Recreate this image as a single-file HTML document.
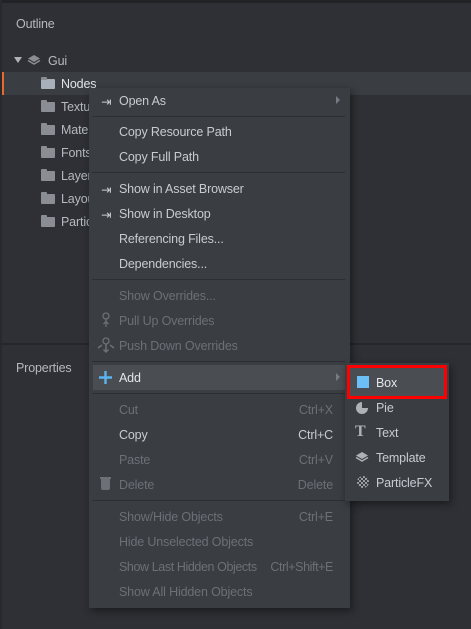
<!DOCTYPE html>
<html><head><style>
*{margin:0;padding:0;box-sizing:border-box}
body{width:471px;height:629px;background:#2e3035;position:relative;overflow:hidden;font-family:"Liberation Sans","DejaVu Sans",sans-serif;font-size:12.5px;color:#b5b9bf;letter-spacing:-0.15px}
.a{position:absolute;white-space:nowrap}
.mi{position:absolute;left:119px;line-height:14px;white-space:nowrap}
.sc{position:absolute;right:138px;line-height:14px;white-space:nowrap}
.dis{color:#6c7077}
.en{color:#c8ccd2}
.sep{position:absolute;left:92px;width:253px;height:1px;background:#2c2e32}
.fold{position:absolute;left:41px;width:14px;height:10px;background:#8a8e94;border-radius:1px}
.fold:before{content:"";position:absolute;left:0;top:-2px;width:6px;height:3px;background:#8a8e94;border-radius:1px 1px 0 0}
.tr{position:absolute;left:61px;line-height:14px;color:#b5b9bf}
.t{margin-top:1px}
</style></head><body>
<div class="a" style="left:0;top:0;width:471px;height:3px;background:#222327"></div>
<div class="a" style="left:0;top:0;width:2px;height:629px;background:#27292c"></div>
<div class="a" style="left:16px;top:17px;color:#b5b9bf">Outline</div>
<div class="a" style="left:14px;top:57px;width:0;height:0;border-left:4px solid transparent;border-right:4px solid transparent;border-top:6px solid #aeb2b8"></div>
<svg class="a" style="left:27px;top:54px" width="14" height="12" viewBox="0 0 14 12"><path d="M7 1L13 4.5 7 8 1 4.5Z" fill="#8a8e94"/><path d="M1 6.5L7 10 13 6.5" stroke="#8a8e94" stroke-width="1.5" fill="none"/></svg>
<div class="a" style="left:48px;top:54px">Gui</div>
<div class="a" style="left:3px;top:72px;width:468px;height:23px;background:#3a3d42"></div>
<div class="a" style="left:2px;top:72px;width:2px;height:23px;background:#e86a2c"></div>
<div class="fold" style="top:79px;background:#a8b0bb"></div>
<div class="tr" style="top:77px;color:#e0e3e7">Nodes</div>
<div class="fold" style="top:102px"></div><div class="tr" style="top:100px">Textures</div>
<div class="fold" style="top:125px"></div><div class="tr" style="top:123px">Materials</div>
<div class="fold" style="top:148px"></div><div class="tr" style="top:146px">Fonts</div>
<div class="fold" style="top:171px"></div><div class="tr" style="top:169px">Layers</div>
<div class="fold" style="top:194px"></div><div class="tr" style="top:192px">Layouts</div>
<div class="fold" style="top:217px"></div><div class="tr" style="top:215px">Particles</div>
<div class="a" style="left:0;top:343px;width:471px;height:2px;background:#242629"></div>
<div class="a" style="left:16px;top:361px">Properties</div>

<div class="a" style="left:89px;top:88px;width:261px;height:520px;background:#3a3d42;box-shadow:2px 3px 8px rgba(0,0,0,.45)"></div>
<div class="a en" style="left:101px;top:94px">⇥</div><div class="mi en" style="top:94px">Open As</div>
<div class="a" style="left:336px;top:96px;border-left:4px solid #777b82;border-top:4px solid transparent;border-bottom:4px solid transparent"></div>
<div class="sep" style="top:116px"></div>
<div class="mi en" style="top:125px">Copy Resource Path</div>
<div class="mi en" style="top:150px">Copy Full Path</div>
<div class="sep" style="top:172px"></div>
<div class="a en" style="left:101px;top:182px">⇥</div><div class="mi en" style="top:182px">Show in Asset Browser</div>
<div class="a en" style="left:101px;top:207px">⇥</div><div class="mi en" style="top:207px">Show in Desktop</div>
<div class="mi en" style="top:232px">Referencing Files...</div>
<div class="mi en" style="top:257px">Dependencies...</div>
<div class="sep" style="top:279px"></div>
<div class="mi dis" style="top:289px">Show Overrides...</div>
<svg class="a" style="left:100px;top:312px" width="12" height="16"><circle cx="6" cy="4" r="3" fill="none" stroke="#6c7077" stroke-width="1.3"/><path d="M6 7V15M3.5 12L6 9.5 8.5 12" stroke="#6c7077" stroke-width="1.3" fill="none"/></svg>
<div class="mi dis" style="top:314px">Pull Up Overrides</div>
<svg class="a" style="left:97px;top:337px" width="18" height="16"><circle cx="9" cy="4" r="3" fill="none" stroke="#6c7077" stroke-width="1.3"/><path d="M9 7V15M6.5 12.5L9 15 11.5 12.5M1 11L5 8M17 11L13 8" stroke="#6c7077" stroke-width="1.5" fill="none"/></svg>
<div class="mi dis" style="top:339px">Push Down Overrides</div>
<div class="sep" style="top:361px"></div>
<div class="a" style="left:93px;top:365px;width:253px;height:25px;background:#4a4d52"></div>
<svg class="a" style="left:99px;top:371px" width="13" height="13"><path d="M6.5 0V13M0 6.5H13" stroke="#5ab4f0" stroke-width="2.4"/></svg>
<div class="mi" style="top:371px;color:#e3e6ea">Add</div>
<div class="a" style="left:336px;top:373px;border-left:4px solid #777b82;border-top:4px solid transparent;border-bottom:4px solid transparent"></div>
<div class="sep" style="top:393px"></div>
<div class="mi dis" style="top:403px">Cut</div><div class="sc dis" style="top:403px">Ctrl+X</div>
<div class="mi en" style="top:428px">Copy</div><div class="sc en" style="top:428px">Ctrl+C</div>
<div class="mi dis" style="top:453px">Paste</div><div class="sc dis" style="top:453px">Ctrl+V</div>
<div class="a" style="left:101px;top:479px;width:9px;height:11px;background:#6c7077;border-radius:0 0 2px 2px"></div>
<div class="a" style="left:100px;top:477px;width:11px;height:1.5px;background:#6c7077"></div>
<div class="mi dis" style="top:478px">Delete</div><div class="sc dis" style="top:478px">Delete</div>
<div class="sep" style="top:500px"></div>
<div class="mi dis" style="top:510px">Show/Hide Objects</div><div class="sc dis" style="top:510px">Ctrl+E</div>
<div class="mi dis" style="top:535px">Hide Unselected Objects</div>
<div class="mi dis" style="top:560px;letter-spacing:-0.4px">Show Last Hidden Objects</div><div class="sc dis" style="top:560px;letter-spacing:-0.4px">Ctrl+Shift+E</div>
<div class="mi dis" style="top:585px">Show All Hidden Objects</div>

<div class="a" style="left:345px;top:363px;width:104px;height:138px;background:#3a3d42;box-shadow:2px 3px 8px rgba(0,0,0,.45)"></div>
<div class="a" style="left:347px;top:365px;width:100px;height:34px;background:#4a4d52;border:3px solid #ff0000"></div>
<div class="a" style="left:357px;top:376px;width:12px;height:12px;background:#6cc0f5"></div>
<div class="a" style="left:376px;top:376px;color:#e3e6ea">Box</div>
<svg class="a" style="left:356px;top:401px" width="13" height="13"><path d="M6 1A6 6 0 1 0 12 7H6Z" fill="#aeb2b8"/></svg>
<div class="a en" style="left:376px;top:401px">Pie</div>
<div class="a" style="left:355px;top:423px;font-family:'Liberation Serif',serif;font-weight:bold;font-size:16px;color:#aeb2b8">T</div>
<div class="a en" style="left:376px;top:426px">Text</div>
<svg class="a" style="left:355px;top:451px" width="14" height="12" viewBox="0 0 14 12"><path d="M7 1L13 4.5 7 8 1 4.5Z" fill="#aeb2b8"/><path d="M1 6.5L7 10 13 6.5" stroke="#aeb2b8" stroke-width="1.5" fill="none"/></svg>
<div class="a en" style="left:376px;top:451px">Template</div>
<div class="a" style="left:357px;top:476px;width:12px;height:12px;background:repeating-conic-gradient(#9a9ea4 0 25%,#3a3d42 0 50%) 0 0/4px 4px;border-radius:50%"></div>
<div class="a en" style="left:376px;top:476px">ParticleFX</div>
</body></html>
